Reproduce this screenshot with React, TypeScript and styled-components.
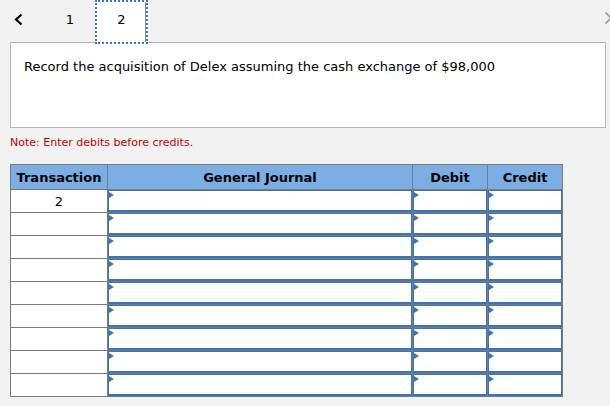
import React from "react";
import styled, { createGlobalStyle } from "styled-components";

const GlobalStyle = createGlobalStyle`
  html, body {
    margin: 0;
    padding: 0;
    background: #f2f2f2;
    overflow: hidden;
  }
  body {
    font-family: "DejaVu Sans", Verdana, sans-serif;
    color: #000;
  }
`;

const Page = styled.div`
  width: 610px;
  height: 406px;
  padding-left: 10px;
  box-sizing: border-box;
  position: relative;
`;

const TabBar = styled.div`
  height: 42px;
  display: flex;
  align-items: flex-start;
  position: relative;
  z-index: 2;
`;

const ArrowButton = styled.div<{ $muted?: boolean }>`
  width: 10px;
  height: 39px;
  display: flex;
  align-items: center;
  justify-content: center;
  color: ${(p) => (p.$muted ? "#9a9a9a" : "#000")};
`;

const PrevButton = styled(ArrowButton)`
  margin-left: 3px;
`;

const NextButton = styled(ArrowButton)`
  position: absolute;
  left: 593px;
  top: -2px;
`;

const Tab = styled.div<{ $active?: boolean; $w: number; $pl?: number }>`
  width: ${(p) => p.$w}px;
  height: 44px;
  box-sizing: border-box;
  display: flex;
  align-items: center;
  justify-content: center;
  padding-bottom: 5px;
  padding-left: ${(p) => p.$pl ?? 0}px;
  font-size: 13px;
  background: ${(p) => (p.$active ? "#fff" : "transparent")};
  border: ${(p) => (p.$active ? "2px dotted #3b78c4" : "2px solid transparent")};
  box-shadow: ${(p) => (p.$active ? "inset -1px 0 0 #8c8c8c" : "none")};
`;

const QuestionBox = styled.div`
  width: 596px;
  height: 86px;
  box-sizing: border-box;
  background: #fff;
  border: 1px solid #b4b4b4;
  padding: 16px 0 0 13px;
  font-size: 13px;
  line-height: 16px;
`;

const Note = styled.div`
  color: #c00000;
  font-size: 11px;
  line-height: 14px;
  margin-top: 8px;
`;

const Table = styled.table`
  margin-top: 14px;
  border-collapse: collapse;
  width: 553px;
  table-layout: fixed;
`;

const HeadCell = styled.th<{ $w: number }>`
  width: ${(p) => p.$w}px;
  height: 25px;
  box-sizing: border-box;
  background: #7aaee5;
  border: 1px solid #7a7a7a;
  font-size: 13px;
  font-weight: bold;
  padding: 0;
  text-align: center;
  vertical-align: middle;
`;

const Cell = styled.td`
  height: 23px;
  box-sizing: border-box;
  border: 1px solid #7a7a7a;
  background: #fff;
  padding: 0;
  font-size: 13px;
  text-align: center;
  vertical-align: middle;
`;

const InputCell = styled.td`
  height: 23px;
  box-sizing: border-box;
  border: 1px solid #7a7a7a;
  background: #fff;
  padding: 0;
`;

const InputBox = styled.div`
  position: relative;
  height: 22px;
  box-sizing: border-box;
  border: 1px solid #3c74b8;
  border-bottom-width: 2px;
  background: #fff;
`;

const Marker = styled.span`
  position: absolute;
  left: 0;
  top: 1px;
  width: 0;
  height: 0;
  border-top: 3px solid transparent;
  border-bottom: 3px solid transparent;
  border-left: 5px solid #3c74b8;
`;

const Chevron = ({ dir, h = 14 }: { dir: "left" | "right"; h?: number }) => (
  <svg width="9" height={h} viewBox={`0 0 9 ${h}`} fill="none">
    <path
      d={
        dir === "left"
          ? `M7.5 1.5 L2 ${h / 2} L7.5 ${h - 1.5}`
          : `M1.5 1.5 L7 ${h / 2} L1.5 ${h - 1.5}`
      }
      stroke="currentColor"
      strokeWidth={dir === "left" ? 2.2 : 1.6}
    />
  </svg>
);

const rows = Array.from({ length: 9 }, (_, i) => i);

export default function App() {
  return (
    <>
      <GlobalStyle />
      <Page>
        <TabBar>
          <PrevButton>
            <Chevron dir="left" h={13} />
          </PrevButton>
          <Tab $w={72} $pl={22}>
            1
          </Tab>
          <Tab $w={53} $active>
            2
          </Tab>
          <NextButton $muted>
            <Chevron dir="right" h={14} />
          </NextButton>
        </TabBar>
        <QuestionBox>
          Record the acquisition of Delex assuming the cash exchange of $98,000
        </QuestionBox>
        <Note>Note: Enter debits before credits.</Note>
        <Table>
          <thead>
            <tr>
              <HeadCell $w={97}>Transaction</HeadCell>
              <HeadCell $w={305}>General Journal</HeadCell>
              <HeadCell $w={75}>Debit</HeadCell>
              <HeadCell $w={75}>Credit</HeadCell>
            </tr>
          </thead>
          <tbody>
            {rows.map((i) => (
              <tr key={i}>
                <Cell>{i === 0 ? "2" : ""}</Cell>
                {[0, 1, 2].map((c) => (
                  <InputCell key={c}>
                    <InputBox>
                      <Marker />
                    </InputBox>
                  </InputCell>
                ))}
              </tr>
            ))}
          </tbody>
        </Table>
      </Page>
    </>
  );
}
